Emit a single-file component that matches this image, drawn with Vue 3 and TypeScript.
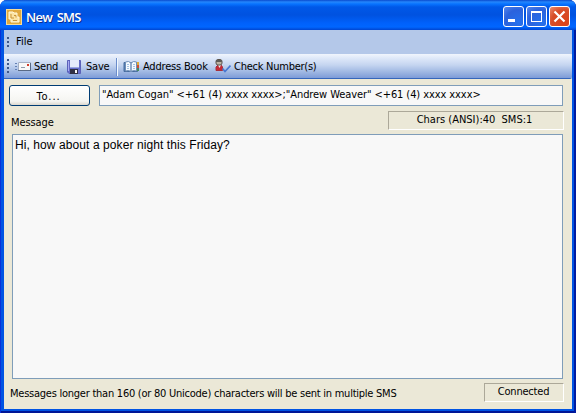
<script setup lang="ts">
import { ref } from 'vue'

const recipients = ref<string>('"Adam Cogan" <+61 (4) xxxx xxxx>;"Andrew Weaver" <+61 (4) xxxx xxxx>')
const message = ref<string>('Hi, how about a poker night this Friday?')
const charCount = ref<number>(40)
const smsCount = ref<number>(1)
</script>

<template>
  <div class="window">
    <header class="titlebar">
      <svg class="app-icon" viewBox="0 0 16 16">
        <rect x=".5" y=".5" width="15" height="15" fill="#e0a93f" stroke="#f7dc98" />
        <path d="M3 3h4l1 1h3v4h2v5H5v-3H3z" fill="#fbe3a2" stroke="#fff7dc" />
        <path d="M5 5v4h3M8 6.500h2v2M7 11.500h4" fill="none" stroke="#c9943a" />
      </svg>
      <h1 class="title">New SMS</h1>
      <div class="controls">
        <button class="control" aria-label="Minimize">
          <svg viewBox="0 0 21 21"><path d="M5 13h7v3H5z" fill="#fff" /></svg>
        </button>
        <button class="control" aria-label="Maximize">
          <svg viewBox="0 0 21 21"><path d="M5 5h11v11H5zM6 7v8h9V7z" fill="#fff" fill-rule="evenodd" /></svg>
        </button>
        <button class="control close" aria-label="Close">
          <svg viewBox="0 0 21 21"><path d="M5.500 5.500l10 10M15.500 5.500l-10 10" stroke="#fff" stroke-width="2.200" /></svg>
        </button>
      </div>
    </header>

    <div class="client">
      <nav class="menubar">
        <i class="grip"></i>
        <span class="file">File</span>
      </nav>
      <div class="toolbar">
        <i class="grip tall"></i>
        <button class="tool send">
          <svg viewBox="0 0 16 16">
            <path d="M0 4.500h2M0 7.500h2M0 10.500h2" stroke="#6480b4" />
            <path d="M3.500 3.500h12v8h-12z" fill="#f8f8f8" stroke="#a3afc4" />
            <path d="M3 11.500h13M15.500 4v8" stroke="#596a86" />
            <path d="M12 5h2v2h-2z" fill="#d33c2b" />
            <path d="M6 8.500h4" stroke="#8f9bad" />
          </svg>
          <span>Send</span>
        </button>
        <button class="tool save">
          <svg viewBox="0 0 16 16">
            <path d="M1.500 1.500h13v13H3l-1.500-1.500z" fill="#656bc8" stroke="#5a61b8" />
            <path d="M4 1h9v7H4z" fill="#e6ebfb" />
            <path d="M4 8.500h9" stroke="#9ba7df" />
            <path d="M4 10h8v5H4z" fill="#303044" />
            <path d="M9 11h2v3H9z" fill="#f8f8f8" />
            <path d="M2.500 2v10" stroke="#a7aaf0" />
          </svg>
          <span>Save</span>
        </button>
        <i class="separator"></i>
        <button class="tool book">
          <svg viewBox="0 0 16 16">
            <path d="M1 3.500h13.500v9H1z" fill="#567eb6" stroke="#476c9e" />
            <path d="M2.500 3l3-.500L8 4v8.500l-2.500-1-3 .500zM8 4l2.500-1.500 3 .500v9l-3-.500L8 12.500z" fill="#f5faff" stroke="#6f8fb8" />
            <path d="M4 5.500h2M4 7.500h2M4 9.500h2M10 5.500h2M10 7.500h2M10 9.500h2" stroke="#a6c3e4" />
            <path d="M14 3h2v3h-2z" fill="#e2ab35" /><path d="M14 6h2v3h-2z" fill="#cf4e37" /><path d="M14 9h2v3h-2z" fill="#448b65" />
          </svg>
          <span>Address Book</span>
        </button>
        <button class="tool check">
          <svg viewBox="0 0 16 16">
            <path d="M1 8l2-2h3l1.500 2v3.500H1z" fill="#c62a37" stroke="#a82f3c" />
            <path d="M3 6l1.500 3L6 6z" fill="#eee" />
            <rect x="1" y=".5" width="6" height="5.500" rx="2" fill="#bdb4a5" stroke="#59534d" />
            <path d="M1 3V1h5.500L7 3z" fill="#5d5b57" />
            <path d="M7.500 9.500L10 12.500 15.500 6.500" fill="none" stroke="#4878d2" stroke-width="1.700" />
          </svg>
          <span>Check Number(s)</span>
        </button>
      </div>

      <main class="form">
        <div class="to-row">
          <button class="to"><span>To...</span></button>
          <div class="field"><span>{{ recipients }}</span></div>
        </div>
        <div class="label-row">
          <label class="message-label">Message</label>
          <div class="panel count"><span>Chars (ANSI):{{ charCount }}&nbsp; SMS:{{ smsCount }}</span></div>
        </div>
        <div class="message">{{ message }}</div>
        <footer class="status">
          <span class="hint">Messages longer than 160 (or 80 Unicode) characters will be sent in multiple SMS</span>
          <div class="panel connection"><span>Connected</span></div>
        </footer>
      </main>
    </div>
  </div>
</template>

<style>
body { margin: 0; background: #fff; }
</style>

<style scoped>
* { box-sizing: border-box; }
.window {
  width: 576px; height: 413px; overflow: hidden;
  display: flex; flex-direction: column;
  border-radius: 7px 7px 0 0;
  background: #0054e3;
  box-shadow: inset 1px 0 #0831d9, inset -2px 0 #001ba0, inset 0 -2px #001596;
  font: 11px/14px "DejaVu Sans Condensed", "DejaVu Sans", sans-serif;
  font-stretch: condensed;
  color: #000; white-space: nowrap;
}
button { font: inherit; color: inherit; margin: 0; padding: 0; }
.titlebar {
  height: 30px; flex: none; display: flex; align-items: center; padding: 3px 6px 0 6px;
  background: linear-gradient(#0a4bce 0, #2586fc 2px, #0873ff 4px, #0058e8 7px, #0052e0 15px, #0061fb 23px, #0066ff 27px, #0045d0 30px);
}
.app-icon { width: 16px; height: 16px; }
.title {
  margin: 0 0 0 4px; color: #fff; font: 600 13px/16px "Open Sans", sans-serif;
  text-shadow: 1px 1px #0a2f91; letter-spacing: -.75px; word-spacing: 2px;
}
.controls { display: flex; gap: 2px; margin-left: auto; }
.control {
  width: 21px; height: 21px; border: 1px solid #fff; border-radius: 3px;
  background: radial-gradient(circle at 75% 80%, #2470ed, #2b62dc 60%, #5687ed);
}
.control svg { display: block; width: 21px; height: 21px; margin: -1px; }
.close { background: radial-gradient(circle at 75% 80%, #db4218, #d74d28 60%, #ed8d70); }
.client { flex: 1; margin: 0 4px 4px; background: #ebe8d7; display: flex; flex-direction: column; }
.menubar {
  height: 24px; display: flex; align-items: center; padding: 0 3px;
  background: #b4c8e9;
}
.grip { width: 2px; height: 11px; background: repeating-linear-gradient(#3c5689 0 2px, transparent 2px 4px); }
.grip.tall { height: 15px; }
.file { margin-left: 7px; }
.toolbar {
  height: 25px; display: flex; align-items: center; padding: 0 3px;
  background: linear-gradient(#f0f5fd 0, #dbe6f8 5px, #c5d5f0 11px, #9eb7e2 18px, #7d9cd8 24px, #3566bb 24px);
  border-radius: 0 2px 2px 0;
}
.tool { display: flex; align-items: center; border: 0; background: none; }
.tool svg { width: 16px; height: 16px; flex: none; }
.tool span { margin-left: 3px; letter-spacing: -.2px; }
.send { margin-left: 6px; width: 51px; }
.save { width: 50px; }
.save span { margin-left: 4px; }
.separator { width: 2px; height: 18px; background: linear-gradient(90deg, #6a8ccb 50%, #f1f9ff 50%); }
.book { margin-left: 5px; width: 92px; }
.book span { margin-left: 4px; }
.check span { letter-spacing: -.25px; }
.form { flex: 1; padding: 6px 8px 0 5px; }
.to-row { display: flex; height: 21px; }
.to {
  width: 81px; border: 1px solid #003c74; border-radius: 3px; padding: 2px 2px 0 0; letter-spacing: .9px;
  background: linear-gradient(#fff, #f5f5f1 80%, #dcd8ce);
}
.field { margin-left: 9px; width: 464px; border: 1px solid #7f9db9; background: #f8f8f8; padding: 2px; letter-spacing: -.085px; }
.label-row { display: flex; height: 28px; padding: 5px 0 0 2px; }
.message-label { margin-top: 5px; letter-spacing: -.1px; flex: 1; }
.panel { border: 1px solid; border-color: #aca899 #fff #fff #aca899; text-align: center; height: 19px; line-height: 16px; }
.count { width: 176px; padding-right: 3px; }
.message {
  width: 551px; height: 245px; margin-left: 3px; border: 1px solid #7f9db9; background: #f8f8f8;
  padding: 3px 2px; font: 12px/15px "Liberation Sans", Arial, sans-serif; letter-spacing: .085px;
}
.status { display: flex; padding-left: 1px; justify-content: space-between; margin-top: 4px; }
.hint { margin-top: 4px; letter-spacing: -.245px; }
.connection { width: 80px; letter-spacing: -.2px; padding-right: 1px; }
</style>
